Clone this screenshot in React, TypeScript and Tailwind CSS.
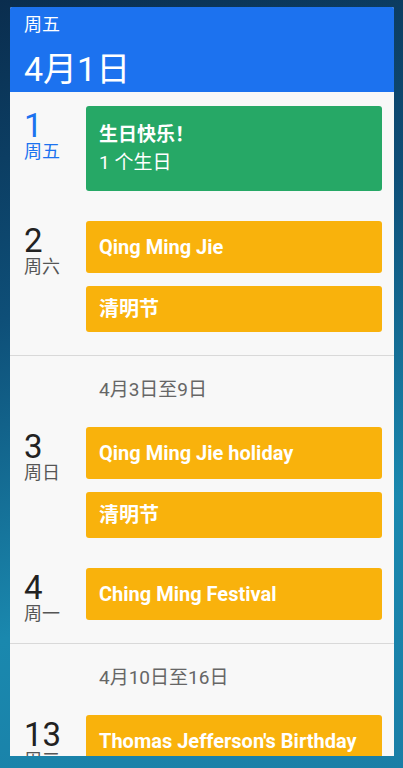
type Chip = { title: string; sub?: string; color: "green" | "yellow"; cjk?: boolean };

type Day = { num: string; week: string; today?: boolean; chips: Chip[] };

type Section = { range?: string; days: Day[] };

const sections: Section[] = [
  {
    days: [
      {
        num: "1",
        week: "周五",
        today: true,
        chips: [{ title: "生日快乐！", sub: "1 个生日", color: "green" }],
      },
      {
        num: "2",
        week: "周六",
        chips: [
          { title: "Qing Ming Jie", color: "yellow" },
          { title: "清明节", color: "yellow", cjk: true },
        ],
      },
    ],
  },
  {
    range: "4月3日至9日",
    days: [
      {
        num: "3",
        week: "周日",
        chips: [
          { title: "Qing Ming Jie holiday", color: "yellow" },
          { title: "清明节", color: "yellow", cjk: true },
        ],
      },
      {
        num: "4",
        week: "周一",
        chips: [{ title: "Ching Ming Festival", color: "yellow" }],
      },
    ],
  },
  {
    range: "4月10日至16日",
    days: [
      {
        num: "13",
        week: "周三",
        chips: [{ title: "Thomas Jefferson's Birthday", color: "yellow" }],
      },
    ],
  },
];

const font = "font-['Roboto','Noto_Sans_CJK_SC',sans-serif]";

export default function App() {
  return (
    <div
      className={`h-[768px] w-[403px] overflow-hidden bg-[linear-gradient(160deg,#0a2d4e_0%,#0e4f78_35%,#1a88ae_70%,#1a7ea6_100%)] pt-[7px] pl-[10px] pr-[9px] ${font}`}
    >
      <div className="flex h-[749px] flex-col overflow-hidden rounded-t-[2px] bg-[#f8f8f8]">
        <header className="flex h-[85px] shrink-0 flex-col bg-[#1c72ef] pl-[14px] pt-[6px] text-white">
          <p className="text-[18px] leading-[24px]">周五</p>
          <p className="mt-[10px] text-[34px] leading-[44px]">4月1日</p>
        </header>

        {sections.map((section, si) => (
          <section
            key={si}
            className={`shrink-0 border-b border-[#d9d9d9] pb-[23px] ${
              section.range ? "pt-[22px]" : "pt-[14px]"
            }`}
          >
            {section.range && (
              <p className="mb-[25px] pl-[89px] text-[19px] leading-[24px] text-[#666666]">
                {section.range}
              </p>
            )}
            <div className="flex flex-col gap-[30px]">
              {section.days.map((day) => (
                <DayRow key={day.num} day={day} />
              ))}
            </div>
          </section>
        ))}
      </div>
    </div>
  );
}

const DayRow = ({ day }: { day: Day }) => (
  <div className="flex pl-[14px] pr-[12px]">
    <div
      className={`h-[52px] w-[62px] shrink-0 pt-[3px] ${
        day.today ? "text-[#1c72ef]" : "text-[#222222]"
      }`}
    >
      <p className="text-[33px] leading-[33px]">{day.num}</p>
      <p
        className={`text-[18px] leading-[20px] ${
          day.today ? "text-[#1c72ef]" : "text-[#555555]"
        }`}
      >
        {day.week}
      </p>
    </div>
    <div className="flex flex-1 flex-col gap-[13px]">
      {day.chips.map((chip, i) => (
        <EventChip key={i} chip={chip} />
      ))}
    </div>
  </div>
);

const EventChip = ({ chip }: { chip: Chip }) => {
  if (chip.sub) {
    return (
      <div className="rounded-[3px] bg-[#26a866] px-[13px] pt-[15px] pb-[14px] text-[19px] leading-[28px] text-white">
        <p className="font-bold">{chip.title}</p>
        <p>{chip.sub}</p>
      </div>
    );
  }
  return (
    <div
      className={`flex items-center rounded-[3px] bg-[#f9b20c] px-[13px] text-[20px] font-bold text-white ${
        chip.cjk ? "h-[46px]" : "h-[52px]"
      }`}
    >
      {chip.title}
    </div>
  );
};
